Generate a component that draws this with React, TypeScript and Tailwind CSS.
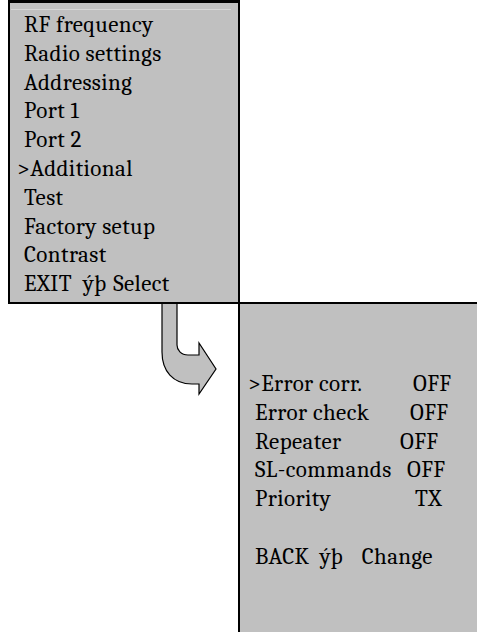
import React from 'react';

type Row = {
    label: string;
    value: string;
    width: number;
    selected?: boolean;
};

const mainItems = [
    'RF frequency',
    'Radio settings',
    'Addressing',
    'Port 1',
    'Port 2',
    'Additional',
    'Test',
    'Factory setup',
    'Contrast',
];

const subRows: Row[] = [
    {label: 'Error corr.', value: 'OFF', width: 165, selected: true},
    {label: 'Error check', value: 'OFF', width: 155},
    {label: 'Repeater', value: 'OFF', width: 145},
    {label: 'SL-commands', value: 'OFF', width: 152},
    {label: 'Priority', value: 'TX', width: 160},
];

function Arrow() {
    const outline = 'M162 304 V352 C162 371 173 384 192 384 H199 V394 L216 369 L199 343 V355 H188 C181 355 177 350 177 345 V304';

    return (
        <svg width="238" height="100" viewBox="0 302 238 100" className="block">
            <path d={outline + ' Z'} fill="#c0c0c0" stroke="none"/>
            <path d={outline} fill="none" stroke="#000" strokeWidth="1.2" strokeLinejoin="miter"/>
        </svg>
    );
}

function App() {
    return (
        <div className="w-[477px] h-[632px] bg-white overflow-hidden text-black font-serif text-[23px] leading-[28.8px] tracking-[0.4px]">
            <div className="ml-[8px] w-[232px] h-[304px] bg-[#c0c0c0] border-t-[3px] border-l-2 border-r-2 border-b-2 border-black">
                <div className="mt-[6px] ml-px mr-[7px] h-px bg-[#d6d6d6]"/>

                <div className="mt-px">
                    {mainItems.map(item => (
                        <div key={item} className={item === 'Additional' ? 'pl-[7px]' : 'pl-[14px]'}>
                            {item === 'Additional' ? '>' + item : item}
                        </div>
                    ))}

                    <div className="flex pl-[14px]">
                        <span>EXIT</span>
                        <span className="ml-[11px]">ýþ</span>
                        <span className="ml-[6px]">Select</span>
                    </div>
                </div>
            </div>

            <div className="flex -mt-[2px]">
                <div className="w-[238px] shrink-0">
                    <Arrow/>
                </div>

                <div className="flex-1 h-[330px] bg-[#c0c0c0] border-t-2 border-l-2 border-black pt-[66px]">
                    {subRows.map(row => (
                        <div key={row.label} className={`flex ${row.selected ? 'pl-[8px]' : 'pl-[15px]'}`}>
                            <span className="shrink-0 whitespace-nowrap" style={{width: row.width}}>
                                {row.selected ? '>' + row.label : row.label}
                            </span>
                            <span>{row.value}</span>
                        </div>
                    ))}

                    <div className="h-[28.8px]"/>

                    <div className="flex pl-[15px]">
                        <span>BACK</span>
                        <span className="ml-[10px]">ýþ</span>
                        <span className="ml-[18px]">Change</span>
                    </div>
                </div>
            </div>
        </div>
    );
}

export default App;
